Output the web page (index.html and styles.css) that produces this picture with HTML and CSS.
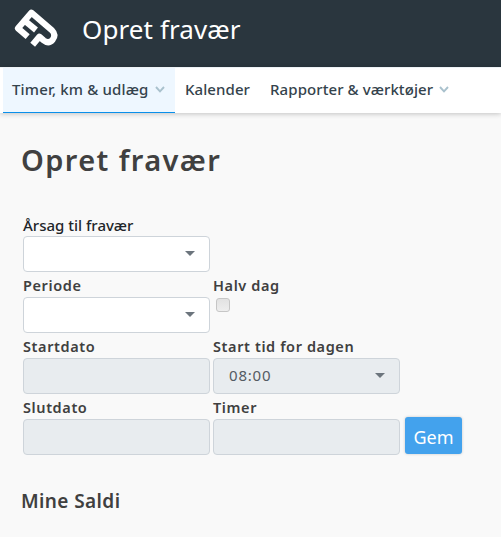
FILE: index.html
```html
<!DOCTYPE html>
<html lang="da">
<head>
<meta charset="utf-8">
<title>Opret fravær</title>
<link rel="stylesheet" href="styles.css">
</head>
<body>
<header class="topbar">
  <svg class="logo" viewBox="0 0 150 135" fill="none" stroke="#fff" stroke-width="18.5" stroke-linejoin="round">
    <path d="M47 92L18 67L58 20L120 73Q133 86 122 101Q110 115 95 103L82 92L62 116"/>
    <path d="M38 44L72 72"/>
  </svg>
  <span class="brand">Opret fravær</span>
</header>
<nav class="nav">
  <a class="item active"><span>Timer, km &amp; udlæg</span><svg class="chev" viewBox="0 0 10 7"><path d="M1 1L5 5.3L9 1"/></svg></a>
  <a class="item"><span>Kalender</span></a>
  <a class="item"><span>Rapporter &amp; værktøjer</span><svg class="chev" viewBox="0 0 10 7"><path d="M1 1L5 5.3L9 1"/></svg></a>
</nav>
<main>
  <h1>Opret fravær</h1>
  <form class="form">
    <div class="field wide"><label class="dark">Årsag til fravær</label><div class="box select"><span></span><i></i></div></div>
    <div class="field"><label>Periode</label><div class="box select"><span></span><i></i></div></div>
    <div class="field"><label>Halv dag</label><div class="check"></div></div>
    <div class="field start"><label>Startdato</label><div class="box off"></div></div>
    <div class="field"><label>Start tid for dagen</label><div class="box select off"><span>08:00</span><i></i></div></div>
    <div class="field start"><label>Slutdato</label><div class="box off"></div></div>
    <div class="field"><label>Timer</label><div class="box off"></div></div>
    <button type="button">Gem</button>
  </form>
  <h2>Mine Saldi</h2>
</main>
</body>
</html>
```
FILE: styles.css
```css
* { box-sizing: border-box; }
body { margin: 0; height: 537px; overflow: hidden; background: #f9f9f9; color: #404040; font-family: "Noto Sans", sans-serif; }
.topbar { height: 67px; background: #2a363e; display: flex; align-items: flex-start; }
.logo { width: 50px; height: 45px; margin: 6px 0 0 12px; }
.brand { color: #fff; font-size: 26px; line-height: 36px; letter-spacing: .1px; margin: 11px 0 0 20px; white-space: nowrap; }
.nav { height: 46px; background: #fff; border-top: 1px solid #edf2f5; display: flex; padding-left: 3px; box-shadow: 0 1px 5px rgba(0,0,0,.22); }
.item { display: flex; align-items: center; padding: 0 10px 3px; font-size: 15px; font-weight: 500; color: #34434c; white-space: nowrap; }
.item span { letter-spacing: .08px; }
.active { width: 172px; padding: 0 9px 2px; background: #eef7ff; border-bottom: 1px solid #0a8fea; }
.active span { letter-spacing: .15px; }
.chev { width: 10px; height: 7px; margin-left: 6px; fill: none; stroke: #a9c1cd; stroke-width: 1.9; }
main { padding: 25px 21px 0; }
h1 { margin: 0; font-size: 29px; line-height: 44px; font-weight: 600; letter-spacing: 1.4px; }
.form { display: grid; grid-template-columns: 187px 187px 58px; column-gap: 3px; margin: 34px 0 0 2px; grid-auto-rows: 61px; }
.wide { grid-column: 1; }
.start { grid-column: 1; }
label { display: block; height: 20px; font-size: 14.5px; line-height: 16px; font-weight: 600; letter-spacing: .6px; white-space: nowrap; }
label.dark { color: #212529; font-size: 15px; line-height: 18px; font-weight: 500; letter-spacing: 0; }
.wide + .field { grid-column: 1; }
.box { height: 36px; border: 1px solid #ced4da; border-radius: 4px; background: #fff; }
.off { background: #e8ecef; }
.select { display: flex; align-items: center; justify-content: space-between; padding: 0 14px 2px 15px; font-size: 15px; letter-spacing: .8px; color: #545b62; }
.select i { width: 0; height: 0; border: 5px solid transparent; border-top-color: #6c757d; border-bottom: 0; }
.check { width: 14px; height: 14px; margin: 1px 0 0 3px; border: 1px solid #c6c6c6; border-radius: 3px; background: linear-gradient(#e2e2e2,#eee); }
button { width: 57px; height: 37px; margin: 18px 0 0 2px; padding: 2px 0 0; border: 0; border-radius: 3px; background: #43a2ed; color: #fff; font: 18px "Noto Sans", sans-serif; box-shadow: 0 0 3px rgba(0,0,0,.2); }
h2 { margin: 27px 0 0; font-size: 19px; line-height: 28px; font-weight: 600; letter-spacing: .4px; }
```
